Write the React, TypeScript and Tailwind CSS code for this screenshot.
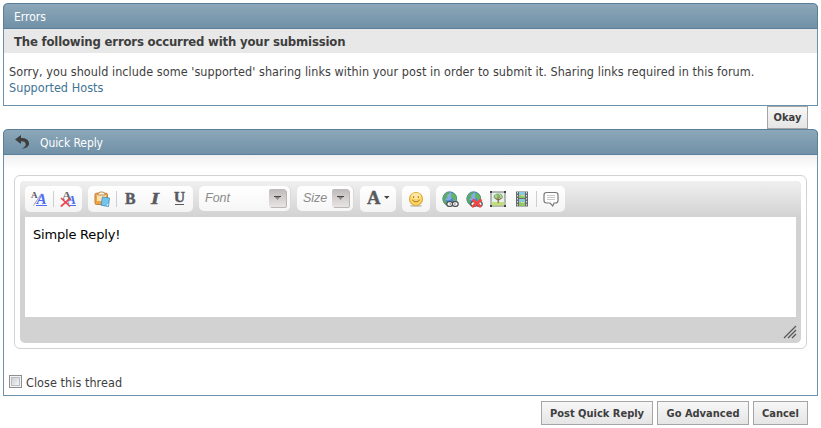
import type { ReactNode } from "react";

const tahoma = "font-['DejaVu_Sans_Condensed','DejaVu_Sans',sans-serif] [font-stretch:condensed]";

function Header({ children }: { children: ReactNode }) {
  return (
    <div className="flex h-[26px] items-center rounded-t-[5px] border border-[#5b7f99] bg-linear-to-b from-[#8ca7b9] to-[#7091a7] text-[12px] text-white">
      {children}
    </div>
  );
}

function Button({ label, className }: { label: string; className: string }) {
  return (
    <button
      className={`flex items-center justify-center whitespace-nowrap border border-[#a5a5a5] bg-linear-to-b from-[#f7f7f7] to-[#e5e5e5] pt-0.5 font-bold text-[11px] text-[#3e3e3e] ${className}`}
    >
      <span>{label}</span>
    </button>
  );
}

function Group({ className, children }: { className: string; children: ReactNode }) {
  return (
    <div className={`flex h-[26px] shrink-0 rounded-[5px] bg-linear-to-b from-white to-[#f4f4f4] ${className}`}>
      {children}
    </div>
  );
}

function Separator({ className }: { className: string }) {
  return <div className={`mt-[5px] h-4 w-px shrink-0 bg-[#cfcfcf] ${className}`} />;
}

function Icon({ className, children }: { className: string; children: ReactNode }) {
  return (
    <svg className={`mt-[5px] shrink-0 overflow-visible ${className}`} width="17" height="17" viewBox="0 0 17 17">
      {children}
    </svg>
  );
}

function Globe() {
  return (
    <>
      <circle cx="7.8" cy="7.8" r="7.2" fill="#5186e0" />
      <circle cx="6" cy="5" r="4.4" fill="#9cbcf2" opacity=".7" />
      <path d="M2 3.5 5 1.2 8 .7 7 3 5 4.5 5.5 7 3 8.5 5 11 5 14.5 2.5 12.8.8 9.8.7 6Z" fill="#5fae66" />
      <path d="m9 2.5 3-.5 2.4 3 .5 3-1.4 3.4-2-1.6-.5-2.5-2.4-1L9.4 4Z" fill="#62b65c" />
      <circle cx="7.8" cy="7.8" r="6.9" fill="none" stroke="#4b8583" strokeWidth=".6" />
    </>
  );
}

function ChainLink() {
  return (
    <g fill="#fff" stroke="#4c4c4c" strokeWidth="1.2">
      <rect x="4.8" y="10.6" width="5.8" height="4.8" rx="2.3" />
      <rect x="10.4" y="10.6" width="5.8" height="4.8" rx="2.3" />
      <path d="M7.5 13h1.4M12.2 13h1.4" strokeWidth="1.2" />
    </g>
  );
}

function Dropdown({ label, className }: { label: string; className: string }) {
  return (
    <div
      className={`flex h-[25px] shrink-0 rounded-[5px] bg-linear-to-b from-white to-[#f6f6f6] shadow-[1px_0_0_#d9d9d9] ${className}`}
    >
      <span className="ml-1.5 flex-1 font-['Liberation_Sans',sans-serif] text-[12.5px] leading-[25px] text-[#8b8b8b] italic">
        {label}
      </span>
      <div className="mt-[3px] mr-1 h-[18px] w-[17px] rounded-xs bg-linear-to-b from-[#bfb8b9] to-[#e9e5e5] shadow-[1px_1px_0_#bbb5b6]">
        <svg width="17" height="18" viewBox="0 0 17 18">
          <path d="M5 7h7L8.5 11Z" fill="#8e8989" />
          <path d="M5 7.5h7" stroke="#444" />
        </svg>
      </div>
    </div>
  );
}

function Toolbar() {
  return (
    <div className="flex h-9 rounded-t-[5px] bg-linear-to-b from-[#f0f0f0] to-[#d2d2d2] pt-[5px] pl-[5px]">
      <Group className="w-[57px]">
        <Icon className="ml-1.5">
          <text x="0" y="6.5" fontSize="9" fontWeight="bold" fill="#55565a" fontFamily="Liberation Serif, serif">A</text>
          <path d="M2.5 14.5 10.5 2.5" stroke="#a5a5a5" />
          <text x="5.5" y="13.2" fontSize="15" fontWeight="bold" fontStyle="italic" fill="#4b6cf5" fontFamily="Liberation Serif, serif">A</text>
          <path d="M5 14.5h11" stroke="#4b6cf5" />
        </Icon>
        <Separator className="ml-[5px]" />
        <Icon className="ml-1.5">
          <text x="2" y="8.5" fontSize="13" fontWeight="bold" fill="#66666a" fontFamily="Liberation Serif, serif">A</text>
          <text x="7" y="13.2" fontSize="13.5" fontWeight="bold" fontStyle="italic" fill="#4b6cf5" fontFamily="Liberation Serif, serif">A</text>
          <path d="M9 14.5h7" stroke="#4b6cf5" />
          <path d="m1 7 9 8.5M10 7.5 .8 15.5" stroke="#ed4850" strokeWidth="1.7" />
        </Icon>
      </Group>
      <Group className="ml-1.5 w-[105px]">
        <Icon className="ml-1.5">
          <rect x="1" y="2.2" width="12.5" height="11.3" rx="1.5" fill="#eda346" stroke="#c57d36" />
          <path d="M3 4h9v6H3Z" fill="#fbe2ae" />
          <path d="M4 4V2.5L6 1h3l2 1.5V4Z" fill="#f8eed9" stroke="#ae7a40" strokeWidth=".8" />
          <path d="m8.5 6 7 1-1 8.5-7.5-1.3Z" fill="#72c5ec" stroke="#438aba" strokeWidth=".8" />
          <path d="m13 15.3.3-2 1.5.2Z" fill="#fff" />
        </Icon>
        <Separator className="ml-[5px]" />
        <Icon className="ml-2">
          <text x="0" y="12.5" fontSize="16" fontWeight="bold" fill="#595a60" stroke="#595a60" strokeWidth=".45" fontFamily="Liberation Serif, serif" textLength="10.5" lengthAdjust="spacingAndGlyphs">B</text>
        </Icon>
        <Icon className="ml-2">
          <text x="1" y="12.5" fontSize="16" fontWeight="bold" fontStyle="italic" fill="#595a60" stroke="#595a60" strokeWidth=".5" fontFamily="Liberation Serif, serif" textLength="8" lengthAdjust="spacingAndGlyphs">I</text>
        </Icon>
        <Icon className="ml-[7px]">
          <text x="0" y="11.3" fontSize="14.5" fontWeight="bold" fill="#595a60" stroke="#595a60" strokeWidth=".45" fontFamily="Liberation Serif, serif" textLength="11" lengthAdjust="spacingAndGlyphs">U</text>
          <path d="M1 13.5h9" stroke="#595a60" />
        </Icon>
      </Group>
      <Dropdown label="Font" className="ml-1.5 w-[91px]" />
      <Dropdown label="Size" className="ml-[7px] w-14" />
      <Group className="ml-[7px] w-9">
        <svg className="mt-[5px] ml-[7px] shrink-0 overflow-visible" width="25" height="17" viewBox="0 0 25 17">
          <text x="0" y="13.3" fontSize="18" fontWeight="bold" fill="#595a60" stroke="#595a60" strokeWidth=".4" fontFamily="Liberation Serif, serif" textLength="13.5" lengthAdjust="spacingAndGlyphs">A</text>
          <path d="M17 5h5.5l-2.7 3Z" fill="#444" />
        </svg>
      </Group>
      <Group className="ml-1.5 w-7">
        <Icon className="ml-1.5">
          <ellipse cx="8" cy="14.8" rx="6.5" ry="1.2" fill="#c9c9c9" />
          <circle cx="8" cy="8" r="6.5" fill="#fbd568" stroke="#deaa3a" strokeWidth="1.1" />
          <ellipse cx="8" cy="5" rx="4.7" ry="3" fill="#ffe9a0" />
          <path d="M5.7 5v2M10.3 5v2M4.3 9q3.7 3.7 7.4 0" fill="none" stroke="#a17522" />
        </Icon>
      </Group>
      <Group className="ml-1.5 w-[129px]">
        <Icon className="ml-1.5"><Globe /><ChainLink /></Icon>
        <Icon className="ml-[7px]">
          <Globe />
          <ChainLink />
          <path d="m6.5 8.5 8.5 7.5M15.5 8.5 6 16" stroke="#f54646" strokeWidth="2.8" />
        </Icon>
        <Icon className="ml-[7px]">
          <rect x="1" y="1" width="14" height="14" fill="#e4f1ee" stroke="#777" />
          <path d="M1.5 11h13v3.5h-13Z" fill="#c1df7c" />
          <path d="M8.2 6v6M8 9 5 7M8.5 9l3-2" stroke="#8a6745" strokeWidth="1.2" />
          <path d="M3.5 7 4 4 7 2.4l4 .3 2 2.5-.5 2.6-3-.8-2 1-2-.5Z" fill="#7ca758" opacity=".85" />
          <path d="m5 4 2 1m2-2 2 2m-6 1h2m3 0h2" stroke="#d6e8b6" strokeWidth=".8" />
          <path d="M0 0h2v2H0Zm14 0h2v2h-2ZM0 14h2v2H0Zm14 0h2v2h-2Z" fill="#444" />
        </Icon>
        <Icon className="ml-[7px]">
          <path d="M2 .5h12v15H2Z" fill="#69696b" />
          <path d="M5 1h6v6H5Zm0 7h6v7H5Z" fill="#86cbe2" />
          <path d="m5 5 3-1.5L11 6v1H5Zm0 7 3-1.5 3 2V15H5Z" fill="#8fc868" />
          <path d="M7 4h3v1H7Zm0 7h3v1H7Z" fill="#e7d66b" />
          <path d="M3.5 1v15M12.5 1v15" stroke="#ddd" strokeDasharray="1.5 1.5" />
        </Icon>
        <Separator className="ml-[5px]" />
        <Icon className="ml-1.5">
          <path d="M3.5 1.5h9Q15 1.5 15 4v5.5Q15 12 12.5 12H11l-1.2 3L7 12H3.5Q1 12 1 9.5V4Q1 1.5 3.5 1.5Z" fill="#fff" stroke="#77777b" strokeWidth="1.2" />
          <path d="M4 4.5h8M4 6.5h8M4 8.5h8" stroke="#c9c9c9" />
        </Icon>
      </Group>
    </div>
  );
}

export default function App() {
  return (
    <div className={`h-[428px] w-[821px] overflow-hidden bg-white pt-[3px] pl-[3px] text-[12px] text-[#3e3e3e] ${tahoma}`}>
      <section className="h-[103px] w-[815px] rounded-t-[5px] border-x border-b border-[#6b91ab]">
        <div className="-mx-px">
          <Header><span className="ml-2.5 pt-px">Errors</span></Header>
        </div>
        <h2 className="h-6 bg-[#e8e8e8] pl-[10px] text-[13px] leading-[25px] font-bold tracking-[-0.18px] whitespace-nowrap">
          The following errors occurred with your submission
        </h2>
        <div className="pt-[11px] pl-[5px] text-[12.5px] leading-4 tracking-[0.06px] whitespace-nowrap">
          <p>Sorry, you should include some 'supported' sharing links within your post in order to submit it. Sharing links required in this forum.</p>
          <a className="text-[#417394]">Supported Hosts</a>
        </div>
      </section>

      <div className="flex w-[805px] justify-end">
        <Button label="Okay" className="h-[23px] w-[41px]" />
      </div>

      <section className="h-[267px] w-[815px] rounded-t-[5px] border-x border-b border-[#6b91ab]">
        <div className="-mx-px">
          <Header>
            <svg className="ml-[11px]" width="16" height="16" viewBox="0 0 16 16">
              <path d="M0 5.5 6 1v3c5 0 8 2 8 5.5 0 2.5-2 4.5-7 5.2 3-1.7 4-3 3.7-4.7C10.4 8 9 7.3 6 7.3V10Z" fill="#3e3e3e" />
            </svg>
            <span className="ml-[9px] pt-px tracking-[-0.08px]">Quick Reply</span>
          </Header>
        </div>
        <div className="h-[220px] bg-linear-to-b from-[#f0f0f0] to-white to-[14px] pt-5 pl-2.5">
          <div className="h-[174px] w-[793px] rounded-[6px] border border-[#d2d2d2] bg-white p-[5px]">
            <div className="h-[162px] w-[781px] rounded-[5px] bg-[#d2d2d2]">
              <Toolbar />
              <div className="ml-[5px] h-[100px] w-[771px] bg-white pt-[9px] pl-2 font-['DejaVu_Sans',sans-serif] text-[13px] leading-[18px] tracking-[-0.2px] text-black [font-stretch:normal]">
                Simple Reply!
              </div>
              <div className="flex justify-end pt-2 pr-1">
                <svg width="14" height="14" viewBox="0 0 14 14">
                  <path d="M1 13 13 1M5 13l8-8M9 13l4-4" stroke="#555" strokeWidth="1.2" />
                </svg>
              </div>
            </div>
          </div>
        </div>
        <label className="ml-[5px] flex h-[13px] items-center text-[12.5px] tracking-[0.06px]">
          <span className="size-[13px] border border-[#8e8f8f] bg-[#f4f4f4] p-px">
            <span className="block size-[9px] border border-[#b9bec5] bg-linear-to-br from-[#cbcfd5] to-[#f6f6f6]" />
          </span>
          <span className="ml-1 pt-[3px]">Close this thread</span>
        </label>
      </section>

      <div className="mt-[5px] flex w-[805px] justify-end gap-1">
        <Button label="Post Quick Reply" className="h-6 w-28" />
        <Button label="Go Advanced" className="h-6 w-[92px]" />
        <Button label="Cancel" className="h-6 w-[55px]" />
      </div>
    </div>
  );
}
